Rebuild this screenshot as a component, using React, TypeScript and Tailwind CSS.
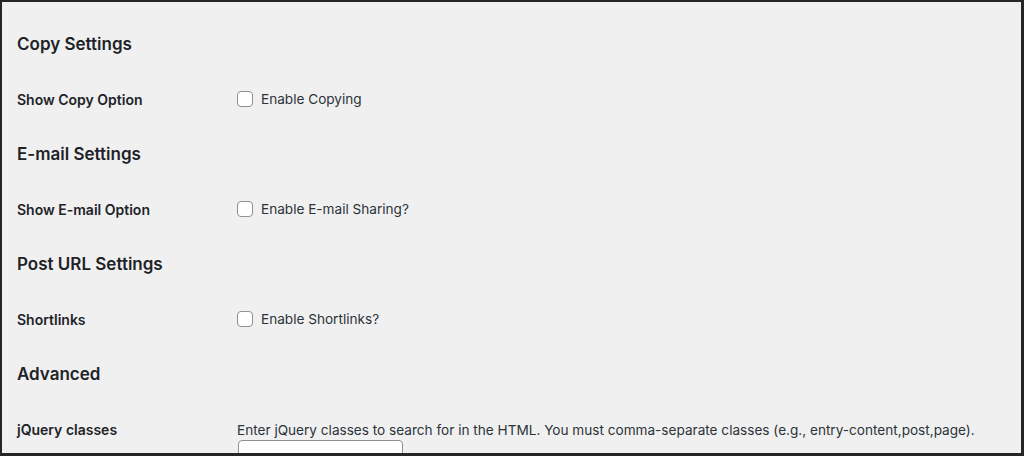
import React from 'react';

const sections = [
  { title: 'Copy Settings', label: 'Show Copy Option', option: 'Enable Copying' },
  { title: 'E-mail Settings', label: 'Show E-mail Option', option: 'Enable E-mail Sharing?' },
  { title: 'Post URL Settings', label: 'Shortlinks', option: 'Enable Shortlinks?' },
];

function Heading({ children }: { children: React.ReactNode }) {
  return (
    <div className="h-[55px] flex items-center">
      <h2 className="text-[17px] font-semibold text-[#1d2327] leading-none">{children}</h2>
    </div>
  );
}

function CheckRow({ label, option }: { label: string; option: string }) {
  return (
    <div className="h-[55px] flex items-center">
      <div className="w-[220px] text-[14px] font-semibold text-[#1d2327]">{label}</div>
      <label className="flex items-center gap-2 text-[13.6px] text-[#2c3338]">
        <span className="w-4 h-4 rounded-[4px] border border-[#8c8f94] bg-white" />
        {option}
      </label>
    </div>
  );
}

export default function App() {
  return (
    <div
      className="w-[1024px] h-[456px] overflow-hidden bg-[#f0f0f1] border-t-2 border-l-2 border-r-[3px] border-b-[3px] border-[#262626]"
      style={{ fontFamily: 'Inter, "Noto Sans", sans-serif' }}
    >
      <div className="pl-[15px] pt-[15px]">
        {sections.map(s => (
          <React.Fragment key={s.title}>
            <Heading>{s.title}</Heading>
            <CheckRow label={s.label} option={s.option} />
          </React.Fragment>
        ))}
        <Heading>Advanced</Heading>
        <div className="flex pt-[18px]">
          <div className="w-[220px] text-[14px] font-semibold text-[#1d2327] leading-5">jQuery classes</div>
          <div className="flex flex-col">
            <p className="text-[13.6px] text-[#2c3338] leading-5">
              Enter jQuery classes to search for in the HTML. You must comma-separate classes (e.g., entry-content,post,page).
            </p>
            <input
              type="text"
              className="ml-[1px] w-[165px] h-[30px] rounded-[4px] border border-[#8c8f94] bg-white"
            />
          </div>
        </div>
      </div>
    </div>
  );
}
